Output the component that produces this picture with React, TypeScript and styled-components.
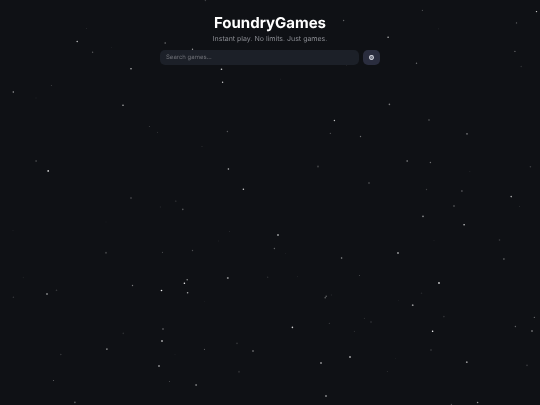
import React from "react";
import styled, { createGlobalStyle } from "styled-components";

const GlobalStyle = createGlobalStyle`
  *, *::before, *::after { box-sizing: border-box; }
  body {
    margin: 0;
    background: #0f1115;
    color: #ffffff;
    font-family: Inter, "Liberation Sans", sans-serif;
    text-rendering: geometricPrecision;
  }
`;

const Sky = styled.svg`
  position: fixed;
  inset: 0;
  z-index: -1;
  width: 100%;
  height: 100%;
  pointer-events: none;
`;

const Page = styled.main`
  display: flex;
  flex-direction: column;
  align-items: center;
  padding: 13px 8px;
`;

const Header = styled.header`
  text-align: center;
`;

const Title = styled.h1`
  margin: 0;
  font-size: 15px;
  line-height: 20px;
  font-weight: 700;
`;

const Tagline = styled.p`
  margin: 0;
  font-size: 7px;
  line-height: 11px;
  color: #8b8d93;
`;

const SearchBar = styled.form`
  display: flex;
  gap: 4px;
  width: 100%;
  max-width: 220px;
  margin-top: 6px;
`;

const SearchInput = styled.input`
  flex: 1;
  min-width: 0;
  height: 15px;
  padding: 0 6px;
  border: 0;
  border-radius: 5px;
  outline: none;
  background: #1c2028;
  color: #ffffff;
  font-family: inherit;
  font-size: 6px;
  text-rendering: inherit;

  &::placeholder {
    color: #6d6f75;
    opacity: 1;
  }
`;

const SettingsButton = styled.button`
  display: flex;
  align-items: center;
  justify-content: center;
  width: 17px;
  height: 15px;
  padding: 0;
  border: 0;
  border-radius: 5px;
  background: #2a2d3e;
  cursor: pointer;
`;

// x, y, radius, opacity
type Star = [number, number, number, number];

const stars: Star[] = [
  [77.2, 41.5, 0.8, 0.7], [92.6, 52.3, 0.7, 0.3], [86.5, 28.5, 0.6, 0.1], [111.5, 47.5, 0.6, 0.06],
  [131, 68.8, 0.8, 0.7], [165.2, 43, 0.8, 0.4], [13.3, 92, 0.7, 0.65], [51.4, 85.5, 0.6, 0.2],
  [36, 98, 0.7, 0.06], [123, 105.2, 0.8, 0.65], [149.4, 126.5, 0.6, 0.2], [157.5, 132.4, 0.6, 0.12],
  [192.5, 49.3, 0.7, 0.6], [221.5, 69.2, 0.8, 0.8], [222.6, 82.2, 0.7, 0.8], [205.4, 0.5, 0.7, 0.2],
  [343.6, 20.5, 0.7, 0.35], [346.4, 64.6, 0.7, 0.5], [334.4, 120.5, 0.7, 0.75], [227.4, 131.5, 0.7, 0.3],
  [330.4, 133.4, 0.7, 0.25], [280.5, 79.3, 0.7, 0.05], [422.4, 10.4, 0.6, 0.25], [388.1, 37.3, 0.8, 0.7],
  [438.5, 28.8, 0.6, 0.08], [536.5, 11.6, 0.7, 0.85], [516.5, 22.9, 0.7, 0.35], [514.9, 51.4, 0.7, 0.35],
  [521.2, 66.5, 0.7, 0.15], [416.5, 63.2, 0.7, 0.4], [389.4, 104.4, 0.8, 0.45], [429, 120, 0.9, 0.22],
  [467, 133.8, 0.9, 0.4],
  [36.1, 161, 1, 0.18], [48.2, 170.9, 0.9, 0.8], [131, 198, 1, 0.18], [175.7, 201.2, 0.9, 0.1],
  [160.4, 207, 0.7, 0.08], [106, 222, 0.7, 0.04], [13, 230.6, 0.7, 0.06], [106, 252.8, 1, 0.2],
  [162.5, 252.4, 0.6, 0.22],
  [202, 146.5, 0.8, 0.08], [228.4, 169, 0.8, 0.75], [243.4, 189.3, 0.8, 0.8], [318, 166.5, 0.9, 0.22],
  [182.8, 209.4, 0.8, 0.3], [229.5, 231.5, 0.6, 0.1], [278, 235, 1, 0.55], [274.4, 248.5, 0.7, 0.35],
  [192.5, 250.5, 0.7, 0.25], [285.4, 253.6, 0.6, 0.06], [341.6, 258, 0.8, 0.55], [218.5, 241, 0.7, 0.05],
  [360.5, 136.5, 0.7, 0.4], [407.2, 161, 0.9, 0.35], [430.4, 162.5, 0.7, 0.4], [530.4, 166.8, 0.8, 0.2],
  [469.8, 171.5, 0.6, 0.08], [369, 183, 1, 0.2], [426.5, 189.5, 0.7, 0.2], [461.9, 191, 1, 0.22],
  [511.2, 196.6, 0.8, 0.65], [454, 206, 1, 0.22], [519.5, 206.4, 0.6, 0.1], [423, 216.3, 0.9, 0.5],
  [464.1, 224.7, 0.8, 0.8], [434, 240.5, 0.7, 0.05], [499.5, 240, 0.8, 0.2], [398, 253, 0.9, 0.6],
  [503.9, 259, 1, 0.25],
  [23.4, 277.5, 0.7, 0.06], [56.5, 290.2, 0.8, 0.18], [47, 294, 1, 0.45], [13.4, 297.3, 0.8, 0.16],
  [132.5, 285.5, 0.7, 0.45], [161.5, 290.5, 0.8, 0.95], [123.3, 333.4, 0.8, 0.12], [163, 329, 1, 0.25],
  [162, 341, 1, 0.6], [106.9, 349.1, 0.9, 0.5], [60.8, 354.5, 0.8, 0.16], [159, 366, 1, 0.5],
  [53.5, 380.5, 0.6, 0.35], [169.5, 381.5, 0.6, 0.25], [74.9, 402.4, 0.8, 0.35], [175, 354.3, 0.6, 0.06],
  [187.2, 279.7, 0.8, 0.5], [184.4, 283.3, 0.8, 0.95], [187.6, 292.7, 0.8, 0.65], [227.8, 278, 1, 0.5],
  [267.7, 277.2, 0.7, 0.14], [297.5, 276.6, 0.6, 0.07], [204.4, 301.6, 0.6, 0.05], [326.2, 296.2, 0.8, 0.35],
  [325.2, 297.8, 0.8, 0.35], [331.4, 295, 0.7, 0.08], [292.4, 327.4, 0.8, 0.8], [329.4, 323.4, 0.7, 0.15],
  [354.4, 331.4, 0.6, 0.12], [237, 343.4, 0.8, 0.16], [204.5, 349.4, 0.6, 0.3], [253, 351, 1, 0.32],
  [350, 357, 1, 0.6], [321, 363, 1, 0.5], [239, 371.8, 1, 0.12], [196.1, 385, 1, 0.4],
  [326, 396, 1, 0.48], [359.5, 275.5, 0.6, 0.25],
  [439, 283, 0.9, 0.8], [421.5, 293.2, 0.8, 0.1], [398.5, 300.5, 0.6, 0.05], [412.7, 305.2, 0.9, 0.55],
  [443.9, 316.6, 0.8, 0.16], [364.4, 318.4, 0.6, 0.12], [371, 322, 1, 0.1], [515.4, 326.5, 0.7, 0.35],
  [534.4, 317.4, 0.7, 0.35], [432.6, 331.2, 0.8, 1], [532, 331, 1, 0.35], [431, 350, 1, 0.12],
  [395.5, 358.5, 0.6, 0.05], [387.4, 371.5, 0.6, 0.12], [466.8, 362.2, 0.9, 0.55], [527, 365.4, 0.8, 0.18],
  [477.6, 402.5, 0.8, 0.55], [451.4, 404.5, 0.7, 0.25],
];

function StarField() {
  return (
    <Sky viewBox="0 0 540 405" preserveAspectRatio="xMidYMid slice" aria-hidden="true">
      {stars.map(([x, y, r, opacity]) => (
        <circle key={`${x}-${y}`} cx={x} cy={y} r={r} fill="#ffffff" fillOpacity={opacity} />
      ))}
    </Sky>
  );
}

function GearIcon() {
  return (
    <svg width="5" height="5" viewBox="0 0 10 10" fill="none" aria-hidden="true">
      <circle cx="5" cy="5" r="3.7" stroke="#dcdee6" strokeWidth="2.2" />
      <circle cx="5" cy="5" r="4.5" stroke="#dcdee6" strokeWidth="1" strokeDasharray="1.8 1.73" />
      <circle cx="5" cy="5" r="2.2" fill="#8a8d9c" />
    </svg>
  );
}

export default function App() {
  return (
    <>
      <GlobalStyle />
      <StarField />
      <Page>
        <Header>
          <Title>FoundryGames</Title>
          <Tagline>Instant play. No limits. Just games.</Tagline>
        </Header>
        <SearchBar role="search" onSubmit={(event) => event.preventDefault()}>
          <SearchInput type="text" placeholder="Search games..." aria-label="Search games" />
          <SettingsButton type="button" aria-label="Settings">
            <GearIcon />
          </SettingsButton>
        </SearchBar>
      </Page>
    </>
  );
}
